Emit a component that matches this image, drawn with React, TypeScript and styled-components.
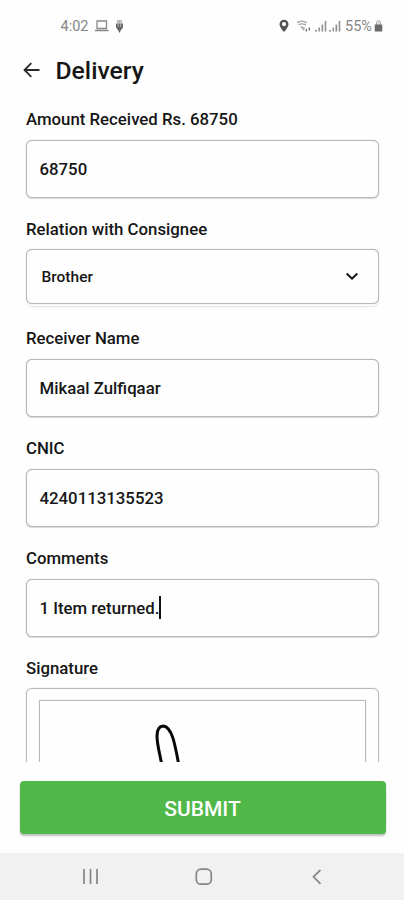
import React from "react";
import styled, { createGlobalStyle } from "styled-components";

const GlobalStyle = createGlobalStyle`
  * { box-sizing: border-box; }
  body { margin: 0; background: #fefefe; }
`;

const Screen = styled.main`
  width: 404px;
  height: 900px;
  display: flex;
  flex-direction: column;
  overflow: hidden;
  background: #fefefe;
  color: #161616;
  font-family: Roboto, "Liberation Sans", sans-serif;
`;

const StatusBar = styled.div`
  height: 50px;
  flex: none;
  display: flex;
  justify-content: space-between;
  padding: 2px 21px 0 60.5px;
  color: #858585;
  font-size: 14.5px;
`;

const StatusGroup = styled.div`
  display: flex;
  align-items: center;
`;

const StatusText = styled.span<{ $width: number; $gap?: number }>`
  width: ${(p) => p.$width}px;
  margin-left: ${(p) => p.$gap ?? 0}px;
  padding-top: 1px;
  line-height: 20px;
  white-space: nowrap;
`;

const Icon = styled.svg<{ $gap?: number }>`
  display: block;
  flex: none;
  margin-left: ${(p) => p.$gap ?? 0}px;
`;

const Header = styled.header`
  height: 42px;
  flex: none;
  display: flex;
  align-items: center;
  padding: 0 0 2px 23px;
`;

const Title = styled.h1`
  margin: 0 0 0 15.5px;
  padding-top: 1px;
  font-size: 24.7px;
  line-height: 32px;
  font-weight: 500;
`;

const Form = styled.form`
  height: 670px;
  flex: none;
  overflow: hidden;
  padding: 16.8px 25px 0 26px;
`;

const Field = styled.div`
  height: 109.75px;
`;

const Label = styled.label`
  display: block;
  height: 20px;
  margin-bottom: 10.8px;
  line-height: 20px;
  font-size: 16.8px;
  font-weight: 500;
  white-space: nowrap;
`;

const Box = styled.div<{ $select?: boolean }>`
  height: ${(p) => (p.$select ? 55 : 58)}px;
  display: flex;
  align-items: center;
  justify-content: space-between;
  padding: ${(p) => (p.$select ? "0 19px 0 14.5px" : "0 12px 0 12.5px")};
  border: 1px solid #b9b9b9;
  border-radius: 6px;
  background: #fefefe;
  box-shadow: ${(p) =>
    p.$select ? "0 0 1px #aaa, 0 3px 0 -1px #fefefe, 0 4px 1px -1px #e2e2e2" : "0 0 1px #aaa, 0 1px 1px #dedede"};
`;

const Value = styled.span<{ $small?: boolean }>`
  display: flex;
  align-items: center;
  font-size: ${(p) => (p.$small ? 15.5 : 16.8)}px;
  font-weight: 500;
`;

const Caret = styled.span`
  width: 2px;
  height: 23px;
  background: #111;
`;

const SignatureBox = styled.div`
  height: 200px;
  padding: 11px 12px;
  border: 1px solid #b9b9b9;
  border-radius: 6px;
  box-shadow: 0 0 1px #aaa;
`;

const SignaturePad = styled.div`
  height: 170px;
  padding: 22.5px 0 0 113px;
  border: 1px solid #bababa;
  box-shadow: 0 0 1px #c4c4c4;
`;

const Footer = styled.div`
  height: 91px;
  flex: none;
  padding: 19px 18.5px 0 19.5px;
`;

const Submit = styled.button`
  width: 100%;
  height: 53px;
  padding: 2px 0 0;
  border: 0;
  border-radius: 4px;
  background: #50b849;
  box-shadow: 0 2px 2px rgba(0, 0, 0, 0.25);
  color: #fff;
  font-family: inherit;
  font-size: 21px;
  font-weight: 500;
  line-height: 24px;
`;

const NavBar = styled.nav`
  flex: 1;
  display: flex;
  justify-content: space-between;
  padding: 12px 75px 0 78px;
  background: #f1f1f1;
`;

const fields = [
  { label: "Amount Received Rs. 68750", value: "68750" },
  { label: "Relation with Consignee", value: "Brother", select: true },
  { label: "Receiver Name", value: "Mikaal Zulfiqaar" },
  { label: "CNIC", value: "4240113135523" },
  { label: "Comments", value: "1 Item returned.", caret: true },
];

const SignalIcon = ({ gap }: { gap: number }) => (
  <Icon $gap={gap} width="12" height="12" viewBox="0 0 12 12" fill="#929292">
    <path d="M0 10h2v1.5H0zM3.5 7.5H5v4H3.5zM6.5 4.5h1.7v7H6.5zM9.7 1h1.6v10.5H9.7z" />
  </Icon>
);

export default function App() {
  return (
    <>
      <GlobalStyle />
      <Screen>
        <StatusBar>
          <StatusGroup>
            <StatusText $width={33}>4:02</StatusText>
            <Icon width="16" height="14" viewBox="0 0 16 14" fill="none" stroke="#888" strokeWidth="1.3">
              <path d="M3 2h9.5v7.5H3zM1 11.5h13.5" />
            </Icon>
            <Icon $gap={5} width="9" height="15" viewBox="0 0 9 15">
              <path d="M2 1h5v3.500H2z" fill="#aaa" />
              <path d="M1 4.500h7v4L6 11 4.500 14 3 11 1 8.500z" fill="#666" />
              <path d="M3.2 1v7M5.8 1v7" stroke="#eee" strokeWidth=".6" />
            </Icon>
          </StatusGroup>
          <StatusGroup>
            <Icon width="10" height="14" viewBox="0 0 10 14">
              <path
                fillRule="evenodd"
                d="M5 .8C2.400.8.500 2.700.500 5.200.500 8.400 5 13 5 13s4.500-4.600 4.500-7.800C9.500 2.700 7.600.8 5 .8zM5 3a2.100 2.100 0 1 1 0 4.200A2.100 2.100 0 0 1 5 3z"
                fill="#555"
              />
            </Icon>
            <Icon $gap={7} width="15" height="13" viewBox="0 0 15 13" fill="none">
              <path d="M1 2.800c3-2 7-2 10 0M2.500 4.800c2-1.200 5-1.200 7.500 0M4.500 6.800l4.500 1.400M6 8.500l2 1.500" stroke="#a2a2a2" strokeWidth="1.3" />
              <path d="M10.300 9v2.500M13.300 10.500V7.500" stroke="#6e6e6e" strokeWidth="1.4" />
            </Icon>
            <SignalIcon gap={3.5} />
            <SignalIcon gap={2} />
            <StatusText $gap={4.5} $width={29}>55%</StatusText>
            <Icon width="9" height="14" viewBox="0 0 9 14">
              <path d="M2.5 6V3.500c0-2.300 4-2.300 4 0V6" fill="#ddd" stroke="#aaa" />
              <path d="M.7 5.500h7.600v7H.7z" fill="#6b6b6b" />
            </Icon>
          </StatusGroup>
        </StatusBar>

        <Header>
          <Icon width="17" height="16" viewBox="0 0 17 16" fill="none" stroke="#292929" strokeWidth="1.8">
            <path d="M16.500 8H1.500M8.300 1.200 1.500 8l6.800 6.800" />
          </Icon>
          <Title>Delivery</Title>
        </Header>

        <Form>
          {fields.map((f) => (
            <Field key={f.label}>
              <Label>{f.label}</Label>
              <Box $select={f.select}>
                <Value $small={f.select}>
                  {f.value}
                  {f.caret && <Caret />}
                </Value>
                {f.select && (
                  <Icon width="14" height="10" viewBox="0 0 14 10" fill="none" stroke="#161616" strokeWidth="2">
                    <path d="m1.700 1.500 5.300 5.200 5.300-5.200" />
                  </Icon>
                )}
              </Box>
            </Field>
          ))}
          <Label>Signature</Label>
          <SignatureBox>
            <SignaturePad>
              <Icon width="32" height="60" viewBox="0 0 32 60" fill="none" stroke="#080808" strokeWidth="3">
                <path d="M9 42C7 30 4 21 4 12 4 5 6 2 10.500 2 19 3 22 20 26 42" />
              </Icon>
            </SignaturePad>
          </SignatureBox>
        </Form>

        <Footer>
          <Submit type="button">SUBMIT</Submit>
        </Footer>

        <NavBar>
          <Icon width="24" height="24" viewBox="0 0 24 24" stroke="#858585" strokeWidth="1.7">
            <path d="M6 4v15M12.500 4v15M19 4v15" />
          </Icon>
          <Icon width="24" height="24" viewBox="0 0 24 24" fill="none" stroke="#858585" strokeWidth="1.7">
            <rect x="4.300" y="4.200" width="15" height="15" rx="4.800" />
          </Icon>
          <Icon width="24" height="24" viewBox="0 0 24 24" fill="none" stroke="#858585" strokeWidth="1.7">
            <path d="m15.500 4.800-7 7 7 7" />
          </Icon>
        </NavBar>
      </Screen>
    </>
  );
}
